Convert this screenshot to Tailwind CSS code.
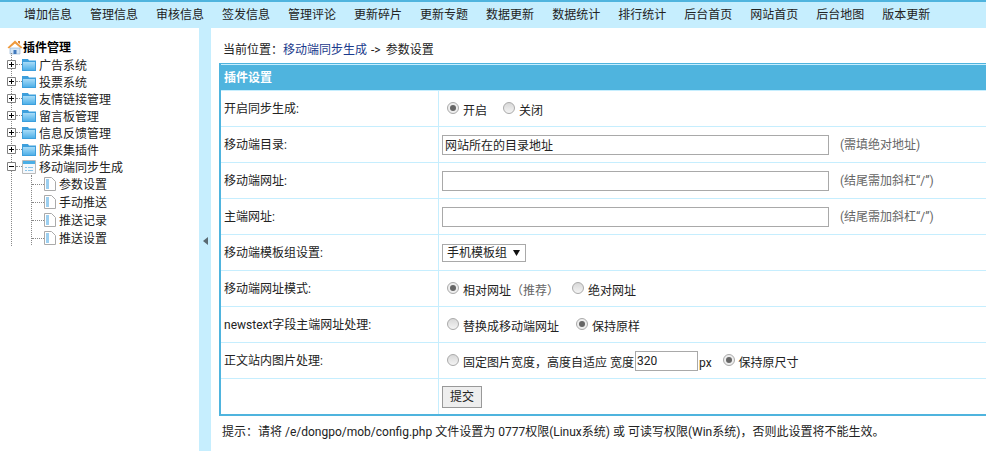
<!DOCTYPE html>
<html lang="zh">
<head>
<meta charset="UTF-8">
<title>插件设置</title>
<script src="https://cdn.jsdelivr.net/npm/@tailwindcss/browser@4"></script>
</head>
<body class="h-[451px] overflow-hidden bg-white text-[12px] text-[#222] font-['Roboto','Noto_Sans_CJK_SC',sans-serif]">
<svg class="absolute h-0 w-0"><defs>
  <linearGradient id="folder" x1="0" y1="0" x2="0" y2="1"><stop offset="0" stop-color="#a8dcf8"/><stop offset="1" stop-color="#4fb0e8"/></linearGradient>
</defs></svg>
<!-- top nav -->
<nav class="flex h-[28px] items-center gap-[18px] border-t-2 border-[#4fb4de] bg-[#c6eefe] pb-px pl-[24px] text-[#222]">
  <a>增加信息</a><a>管理信息</a><a>审核信息</a><a>签发信息</a><a>管理评论</a><a>更新碎片</a><a>更新专题</a><a>数据更新</a><a>数据统计</a><a>排行统计</a><a>后台首页</a><a>网站首页</a><a>后台地图</a><a>版本更新</a>
</nav>
<div class="flex h-[423px]">
  <!-- tree -->
  <aside class="relative w-[199px] shrink-0 pl-[7px] pt-[11px]">
    <div class="absolute left-[11px] top-[25px] h-[193px] border-l border-dotted border-[#888]"></div>
    <div class="flex h-[17px] items-center font-bold text-black">
      <svg class="-mt-[2px]" width="16" height="16" viewBox="0 0 16 16"><path d="M3 9h10v6H3z" fill="#d5e6f6" stroke="#8fb0d0" stroke-width=".6"/><path d="M6.500 11h3v4h-3z" fill="#3f78bd"/><path d="M.5 8.500 8 1.500l7.500 7-1.500 1L8 4.500 2 9.500z" fill="#ef9a3d"/><path d="M11 2h2v3l-2-1.500z" fill="#d97f2a"/></svg>插件管理
    </div>
    <div class="mt-[1px] flex h-[17px] items-center">
      <svg class="relative z-10 -mt-[2px]" width="9" height="9" viewBox="0 0 9 9"><path d="M.5.500h8v8h-8z" fill="#fff" stroke="#808080"/><path d="M2 4.500h5M4.500 2v5" stroke="#000"/></svg><span class="-mt-[2px] w-[6px] border-t border-dotted border-[#888]"></span>
      <svg class="-mt-[2px] mr-[3px]" width="14" height="12" viewBox="0 0 14 12"><path d="M0 0h6l1 1.500h7V12H0z" fill="#3d9fdc"/><path d="M1 3h12v8H1z" fill="url(#folder)"/></svg>广告系统
    </div>
    <div class="flex h-[17px] items-center">
      <svg class="relative z-10 -mt-[2px]" width="9" height="9" viewBox="0 0 9 9"><path d="M.5.500h8v8h-8z" fill="#fff" stroke="#808080"/><path d="M2 4.500h5M4.500 2v5" stroke="#000"/></svg><span class="-mt-[2px] w-[6px] border-t border-dotted border-[#888]"></span>
      <svg class="-mt-[2px] mr-[3px]" width="14" height="12" viewBox="0 0 14 12"><path d="M0 0h6l1 1.500h7V12H0z" fill="#3d9fdc"/><path d="M1 3h12v8H1z" fill="url(#folder)"/></svg>投票系统
    </div>
    <div class="flex h-[17px] items-center">
      <svg class="relative z-10 -mt-[2px]" width="9" height="9" viewBox="0 0 9 9"><path d="M.5.500h8v8h-8z" fill="#fff" stroke="#808080"/><path d="M2 4.500h5M4.500 2v5" stroke="#000"/></svg><span class="-mt-[2px] w-[6px] border-t border-dotted border-[#888]"></span>
      <svg class="-mt-[2px] mr-[3px]" width="14" height="12" viewBox="0 0 14 12"><path d="M0 0h6l1 1.500h7V12H0z" fill="#3d9fdc"/><path d="M1 3h12v8H1z" fill="url(#folder)"/></svg>友情链接管理
    </div>
    <div class="flex h-[17px] items-center">
      <svg class="relative z-10 -mt-[2px]" width="9" height="9" viewBox="0 0 9 9"><path d="M.5.500h8v8h-8z" fill="#fff" stroke="#808080"/><path d="M2 4.500h5M4.500 2v5" stroke="#000"/></svg><span class="-mt-[2px] w-[6px] border-t border-dotted border-[#888]"></span>
      <svg class="-mt-[2px] mr-[3px]" width="14" height="12" viewBox="0 0 14 12"><path d="M0 0h6l1 1.500h7V12H0z" fill="#3d9fdc"/><path d="M1 3h12v8H1z" fill="url(#folder)"/></svg>留言板管理
    </div>
    <div class="flex h-[17px] items-center">
      <svg class="relative z-10 -mt-[2px]" width="9" height="9" viewBox="0 0 9 9"><path d="M.5.500h8v8h-8z" fill="#fff" stroke="#808080"/><path d="M2 4.500h5M4.500 2v5" stroke="#000"/></svg><span class="-mt-[2px] w-[6px] border-t border-dotted border-[#888]"></span>
      <svg class="-mt-[2px] mr-[3px]" width="14" height="12" viewBox="0 0 14 12"><path d="M0 0h6l1 1.500h7V12H0z" fill="#3d9fdc"/><path d="M1 3h12v8H1z" fill="url(#folder)"/></svg>信息反馈管理
    </div>
    <div class="flex h-[17px] items-center">
      <svg class="relative z-10 -mt-[2px]" width="9" height="9" viewBox="0 0 9 9"><path d="M.5.500h8v8h-8z" fill="#fff" stroke="#808080"/><path d="M2 4.500h5M4.500 2v5" stroke="#000"/></svg><span class="-mt-[2px] w-[6px] border-t border-dotted border-[#888]"></span>
      <svg class="-mt-[2px] mr-[3px]" width="14" height="12" viewBox="0 0 14 12"><path d="M0 0h6l1 1.500h7V12H0z" fill="#3d9fdc"/><path d="M1 3h12v8H1z" fill="url(#folder)"/></svg>防采集插件
    </div>
    <div class="flex h-[17px] items-center">
      <svg class="relative z-10 -mt-[2px]" width="9" height="9" viewBox="0 0 9 9"><path d="M.5.500h8v8h-8z" fill="#fff" stroke="#808080"/><path d="M2 4.500h5" stroke="#000"/></svg><span class="-mt-[2px] w-[6px] border-t border-dotted border-[#888]"></span>
      <svg class="-mt-[2px] mr-[3px]" width="14" height="14" viewBox="0 0 14 14"><path d="M.5.500h13v13H.5z" fill="#f4f8fc" stroke="#bbb"/><path d="M1 1h12v3H1z" fill="#49aee6"/><path d="M3 7h2v1H3zm3 0h5v1H6zm-3 3h2v1H3zm3 0h5v1H6z" fill="#8ac4e8"/></svg>移动端同步生成
    </div>
    <div class="relative pl-[24px]">
      <div class="absolute left-[24px] -top-px h-[70px] border-l border-dotted border-[#888]"></div>
      <div class="flex h-[18px] items-center"><span class="-mt-[2px] ml-px w-[12px] border-t border-dotted border-[#888]"></span><svg class="-mt-[2px] mr-[3px]" width="12" height="14" viewBox="0 0 12 14"><path d="M.5.500h7l4 4v9H.5z" fill="#fff" stroke="#aaa"/><path d="M2 2h3v10H2z" fill="#9ccff0"/></svg>参数设置</div>
      <div class="flex h-[18px] items-center"><span class="-mt-[2px] ml-px w-[12px] border-t border-dotted border-[#888]"></span><svg class="-mt-[2px] mr-[3px]" width="12" height="14" viewBox="0 0 12 14"><path d="M.5.500h7l4 4v9H.5z" fill="#fff" stroke="#aaa"/><path d="M2 2h3v10H2z" fill="#9ccff0"/></svg>手动推送</div>
      <div class="flex h-[18px] items-center"><span class="-mt-[2px] ml-px w-[12px] border-t border-dotted border-[#888]"></span><svg class="-mt-[2px] mr-[3px]" width="12" height="14" viewBox="0 0 12 14"><path d="M.5.500h7l4 4v9H.5z" fill="#fff" stroke="#aaa"/><path d="M2 2h3v10H2z" fill="#9ccff0"/></svg>推送记录</div>
      <div class="flex h-[18px] items-center"><span class="-mt-[2px] ml-px w-[12px] border-t border-dotted border-[#888]"></span><svg class="-mt-[2px] mr-[3px]" width="12" height="14" viewBox="0 0 12 14"><path d="M.5.500h7l4 4v9H.5z" fill="#fff" stroke="#aaa"/><path d="M2 2h3v10H2z" fill="#9ccff0"/></svg>推送设置</div>
    </div>
  </aside>
  <!-- splitter -->
  <div class="flex w-[12px] shrink-0 items-center justify-center bg-[#c6eefe] pt-[3px]">
    <span class="h-0 w-0 border-y-[4px] border-r-[5px] border-y-transparent border-r-[#5a6a72]"></span>
  </div>
  <main class="min-w-0 flex-1 overflow-hidden pl-[8px]">
    <div class="flex h-[35px] items-center pl-[4px] pt-[9px]">当前位置：<a class="text-[#1a3a8c]">移动端同步生成</a><span class="ml-[4px]">-&gt;</span><span class="ml-[5px]">参数设置</span></div>
    <div class="w-[790px] border-x-2 border-b-2 border-t border-r-0 border-[#4fb4de]">
      <div class="h-px bg-[#c6eefe]"></div>
      <div class="flex h-[25px] items-center bg-[#4fb4de] pt-px pl-[3px] font-bold text-white">插件设置</div>
      <div class="flex h-[36px] border-t border-[#c6eefe]">
        <div class="flex w-[218px] items-center border-r border-[#c6eefe] pt-px pl-[3px]">开启同步生成:</div>
        <div class="flex items-center pl-[8px] pt-[5px]">
          <span class="-mt-[6px] mr-[4px] flex h-[12px] w-[12px] items-center justify-center rounded-full border border-[#aaa] bg-[#eee]"><span class="h-[6px] w-[6px] rounded-full bg-[#666]"></span></span>开启
          <span class="-mt-[6px] ml-[16px] mr-[4px] h-[12px] w-[12px] rounded-full border border-[#aaa] bg-gradient-to-b from-[#d8d8d8] to-[#f4f4f4]"></span>关闭
        </div>
      </div>
      <div class="flex h-[36px] border-t border-[#c6eefe]">
        <div class="flex w-[218px] items-center border-r border-[#c6eefe] pt-px pl-[3px]">移动端目录:</div>
        <div class="flex items-center pl-[3px]">
          <input class="h-[20px] w-[387px] border border-[#a9a9a9] px-[2px]" value="网站所在的目录地址">
          <span class="ml-[11px] text-[#666]">(需填绝对地址)</span>
        </div>
      </div>
      <div class="flex h-[36px] border-t border-[#c6eefe]">
        <div class="flex w-[218px] items-center border-r border-[#c6eefe] pt-px pl-[3px]">移动端网址:</div>
        <div class="flex items-center pl-[3px]">
          <input class="h-[20px] w-[387px] border border-[#a9a9a9] px-[2px]">
          <span class="ml-[11px] text-[#666]">(结尾需加斜杠“/”)</span>
        </div>
      </div>
      <div class="flex h-[36px] border-t border-[#c6eefe]">
        <div class="flex w-[218px] items-center border-r border-[#c6eefe] pt-px pl-[3px]">主端网址:</div>
        <div class="flex items-center pl-[3px]">
          <input class="h-[20px] w-[387px] border border-[#a9a9a9] px-[2px]">
          <span class="ml-[11px] text-[#666]">(结尾需加斜杠“/”)</span>
        </div>
      </div>
      <div class="flex h-[36px] border-t border-[#c6eefe]">
        <div class="flex w-[218px] items-center border-r border-[#c6eefe] pt-px pl-[3px]">移动端模板组设置:</div>
        <div class="flex items-center pl-[3px]">
          <div class="flex h-[18px] w-[84px] items-center border border-[#a9a9a9] pl-[4px]">手机模板组<svg class="ml-[6px]" width="7" height="6" viewBox="0 0 7 6"><path d="M0 0h7L3.500 6z" fill="#111"/></svg></div>
        </div>
      </div>
      <div class="flex h-[36px] border-t border-[#c6eefe]">
        <div class="flex w-[218px] items-center border-r border-[#c6eefe] pt-px pl-[3px]">移动端网址模式:</div>
        <div class="flex items-center pl-[8px] pt-[5px]">
          <span class="-mt-[6px] mr-[4px] flex h-[12px] w-[12px] items-center justify-center rounded-full border border-[#aaa] bg-[#eee]"><span class="h-[6px] w-[6px] rounded-full bg-[#666]"></span></span>相对网址<span class="text-[#666]">（推荐）</span>
          <span class="-mt-[6px] ml-[13px] mr-[4px] h-[12px] w-[12px] rounded-full border border-[#aaa] bg-gradient-to-b from-[#d8d8d8] to-[#f4f4f4]"></span>绝对网址
        </div>
      </div>
      <div class="flex h-[36px] border-t border-[#c6eefe]">
        <div class="flex w-[218px] items-center border-r border-[#c6eefe] pt-px pl-[3px]">newstext字段主端网址处理:</div>
        <div class="flex items-center pl-[8px] pt-[5px]">
          <span class="-mt-[6px] mr-[4px] h-[12px] w-[12px] rounded-full border border-[#aaa] bg-gradient-to-b from-[#d8d8d8] to-[#f4f4f4]"></span>替换成移动端网址
          <span class="-mt-[6px] ml-[17px] mr-[4px] flex h-[12px] w-[12px] items-center justify-center rounded-full border border-[#aaa] bg-[#eee]"><span class="h-[6px] w-[6px] rounded-full bg-[#666]"></span></span>保持原样
        </div>
      </div>
      <div class="flex h-[36px] border-t border-[#c6eefe]">
        <div class="flex w-[218px] items-center border-r border-[#c6eefe] pt-px pl-[3px]">正文站内图片处理:</div>
        <div class="flex items-center pl-[8px] pt-[5px]">
          <span class="-mt-[6px] mr-[4px] h-[12px] w-[12px] rounded-full border border-[#aaa] bg-gradient-to-b from-[#d8d8d8] to-[#f4f4f4]"></span>固定图片宽度，高度自适应 宽度<input class="-mt-[5px] ml-px h-[20px] w-[63px] border border-[#a9a9a9] px-[1px]" value="320"><span class="ml-[1px]">px</span>
          <span class="-mt-[6px] ml-[11px] mr-[4px] flex h-[12px] w-[12px] items-center justify-center rounded-full border border-[#aaa] bg-[#eee]"><span class="h-[6px] w-[6px] rounded-full bg-[#666]"></span></span>保持原尺寸
        </div>
      </div>
      <div class="flex h-[36px] border-t border-[#c6eefe]">
        <div class="w-[218px] border-r border-[#c6eefe]"></div>
        <div class="flex items-center pl-[3px]">
          <button class="h-[22px] w-[40px] border border-[#999] bg-[#eee] text-[#222]">提交</button>
        </div>
      </div>
    </div>
    <p class="mt-[7px] pl-[3px]">提示：请将 /e/dongpo/mob/config.php 文件设置为 0777权限(Linux系统) 或 可读写权限(Win系统)，否则此设置将不能生效。</p>
  </main>
</div>
</body>
</html>
